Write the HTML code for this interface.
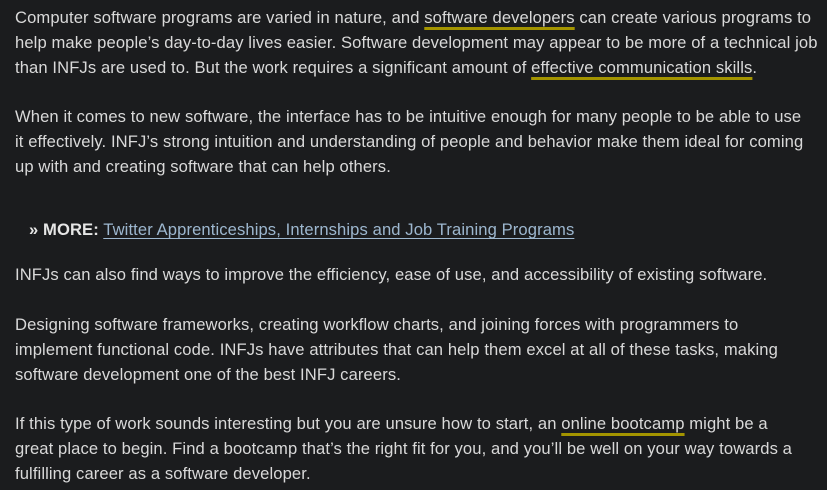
<!DOCTYPE html>
<html><head><meta charset="utf-8"><style>
html,body{margin:0;padding:0;background:#1b1c1e;width:827px;height:490px;overflow:hidden}
body{font-family:"Liberation Sans",sans-serif;font-size:16.6px;letter-spacing:0.1px;color:#d9d9d9;position:relative}
.l{position:absolute;left:15px;height:25px;line-height:25px;white-space:nowrap}
.u{text-decoration:underline;text-decoration-color:#a39400;text-decoration-thickness:3px;text-underline-offset:4px}
a{color:#9db7cf;text-decoration:underline;text-underline-offset:3px}
b{color:#e6e6e6;font-weight:600}
</style></head><body>
<div class="l" style="top:5px">Computer software programs are varied in nature, and <span class="u">software developers</span> can create various programs to</div>
<div class="l" style="top:30px">help make people’s day-to-day lives easier. Software development may appear to be more of a technical job</div>
<div class="l" style="top:55px">than INFJs are used to. But the work requires a significant amount of <span class="u">effective communication skills</span>.</div>
<div class="l" style="top:104px">When it comes to new software, the interface has to be intuitive enough for many people to be able to use</div>
<div class="l" style="top:129px">it effectively. INFJ’s strong intuition and understanding of people and behavior make them ideal for coming</div>
<div class="l" style="top:154px">up with and creating software that can help others.</div>
<div class="l" style="top:217px;left:29px"><b>» MORE:</b> <a>Twitter Apprenticeships, Internships and Job Training Programs</a></div>
<div class="l" style="top:262px">INFJs can also find ways to improve the efficiency, ease of use, and accessibility of existing software.</div>
<div class="l" style="top:312px">Designing software frameworks, creating workflow charts, and joining forces with programmers to</div>
<div class="l" style="top:337px">implement functional code. INFJs have attributes that can help them excel at all of these tasks, making</div>
<div class="l" style="top:362px">software development one of the best INFJ careers.</div>
<div class="l" style="top:411px">If this type of work sounds interesting but you are unsure how to start, an <span class="u">online bootcamp</span> might be a</div>
<div class="l" style="top:436px">great place to begin. Find a bootcamp that’s the right fit for you, and you’ll be well on your way towards a</div>
<div class="l" style="top:461px">fulfilling career as a software developer.</div>
</body></html>
